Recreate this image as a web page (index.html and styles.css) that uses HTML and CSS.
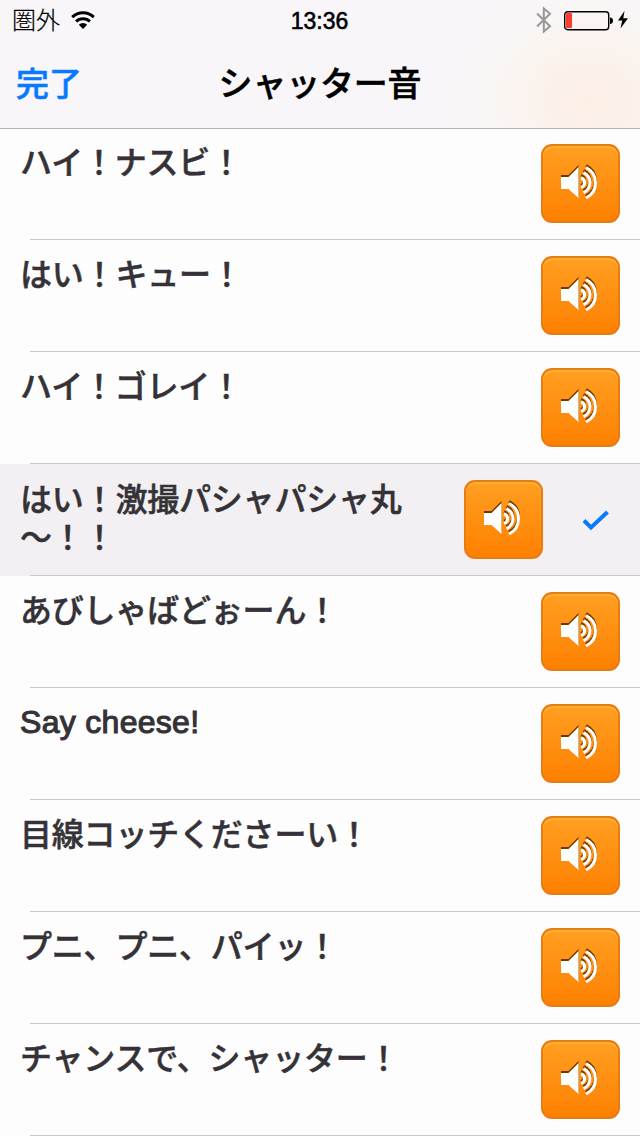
FILE: index.html
```html
<!DOCTYPE html>
<html lang="ja">
<head>
<meta charset="utf-8">
<title>シャッター音</title>
<link rel="stylesheet" href="styles.css">
</head>
<body>
<header class="header">
  <div class="status">
    <div class="status-left">
      <span class="carrier">圏外</span>
      <svg class="wifi" width="26" height="20" viewBox="0 0 26 20">
        <path d="M2.200 7.200a15.600 15.600 0 0 1 21.600 0M6.100 11.500a9.800 9.800 0 0 1 13.800 0" fill="none" stroke="#000" stroke-width="3"/>
        <path d="M13 19l-4.200-4.300a6 6 0 0 1 8.400 0z"/>
      </svg>
    </div>
    <span class="clock">13:36</span>
    <div class="status-right">
      <svg width="16" height="28" viewBox="0 0 16 28">
        <path d="M1 7.500l13 12.700-6.200 5.300V2.500L14 7.800 1 20.500" fill="none" stroke="#98989b" stroke-width="2"/>
      </svg>
      <svg class="battery" width="50" height="20" viewBox="0 0 50 20">
        <rect x=".7" y=".7" width="44" height="18" rx="3" fill="none" stroke="#000" stroke-width="1.400"/>
        <rect x="2" y="2" width="6" height="15" rx="1" fill="#ff3b30"/>
        <path d="M46 6.500q3 .2 3 3.200t-3 3.200z"/>
      </svg>
      <svg class="bolt" width="12" height="18" viewBox="0 0 12 18">
        <path d="M7.500 0L1 9.600h4.200L3.500 17.500 11 7.300H6.300z"/>
      </svg>
    </div>
  </div>
  <nav class="nav">
    <a class="done">完了</a>
    <h1 class="title">シャッター音</h1>
  </nav>
</header>
<svg width="0" height="0" class="defs">
  <symbol id="speaker" viewBox="0 0 40 36">
    <path d="M1 12h7.500L18.500 2v31L8.500 24H1z"/>
    <path d="M21 12.800a5 5 0 0 1 0 9.600M23.500 7.600a11 11 0 0 1 0 20M26 2.500a17 17 0 0 1 0 30.500" class="waves"/>
  </symbol>
</svg>
<ul class="list">
  <li class="row"><span class="label">ハイ！ナスビ！</span><button class="play"><svg class="icon"><use href="#speaker"/></svg></button></li>
  <li class="row"><span class="label">はい！キュー！</span><button class="play"><svg class="icon"><use href="#speaker"/></svg></button></li>
  <li class="row"><span class="label">ハイ！ゴレイ！</span><button class="play"><svg class="icon"><use href="#speaker"/></svg></button></li>
  <li class="row selected"><span class="label">はい！激撮パシャパシャ丸<br>〜！！</span><button class="play"><svg class="icon"><use href="#speaker"/></svg></button><svg class="check" width="28" height="22" viewBox="0 0 28 22"><path d="M2 10.500l7 7L25.500 2" fill="none" stroke="#087aff" stroke-width="4"/></svg></li>
  <li class="row"><span class="label">あびしゃばどぉーん！</span><button class="play"><svg class="icon"><use href="#speaker"/></svg></button></li>
  <li class="row"><span class="label latin">Say cheese!</span><button class="play"><svg class="icon"><use href="#speaker"/></svg></button></li>
  <li class="row"><span class="label">目線コッチくださーい！</span><button class="play"><svg class="icon"><use href="#speaker"/></svg></button></li>
  <li class="row"><span class="label">プニ、プニ、パイッ！</span><button class="play"><svg class="icon"><use href="#speaker"/></svg></button></li>
  <li class="row"><span class="label">チャンスで、シャッター！</span><button class="play"><svg class="icon"><use href="#speaker"/></svg></button></li>
</ul>
</body>
</html>
```
FILE: styles.css
```css
* { box-sizing: border-box; }
body {
  margin: 0;
  height: 1136px;
  overflow: hidden;
  background: #fefdfe;
  color: #343236;
  font-family: "Liberation Sans", "Noto Sans CJK JP", sans-serif;
}
.header {
  height: 129px;
  margin-bottom: -1px;
  border-bottom: 1px solid #b2b1b4;
  background: radial-gradient(ellipse 150px 130px at 590px 100px, #fcefe6 0%, #fbf2ec 35%, rgba(249, 246, 243, .6) 70%, rgba(248, 246, 249, 0) 100%), #f8f6f9;
  color: #000;
}
.status {
  display: grid;
  grid-template-columns: 1fr auto 1fr;
  align-items: center;
  height: 40px;
  padding: 0 11px 0 12px;
}
.status-left, .status-right { display: flex; align-items: center; }
.status-right { justify-content: flex-end; }
.carrier {
  margin-top: -2px;
  font: 300 24px/36px "Noto Sans CJK JP", sans-serif;
  -webkit-text-stroke: .2px #000;
}
.wifi { margin: -1px 0 0 10px; }
.clock {
  margin: 2px 2px 0 0;
  font-size: 23px;
  line-height: 38px;
  -webkit-text-stroke: .6px #000;
}
.battery { margin: 2px 0 0 12px; }
.bolt { margin: 0 0 0 3px; }
.nav {
  display: grid;
  grid-template-columns: 1fr auto 1fr;
  align-items: center;
  height: 88px;
  padding: 0 16px 4px;
}
.done {
  color: #087aff;
  font: 500 33px/48px "Noto Sans CJK JP", sans-serif;
  -webkit-text-stroke: .5px #087aff;
}
.title {
  margin: 0;
  font: 500 34px/48px "Noto Sans CJK JP", sans-serif;
  letter-spacing: -.2px;
  -webkit-text-stroke: .5px #000;
}
.defs { position: absolute; }
.list { margin: 0; padding: 0; list-style: none; }
.row {
  display: flex;
  align-items: flex-start;
  height: 112px;
  padding: 16px 20px 0 20px;
  background: linear-gradient(#c8c7cc, #c8c7cc) 30px 111px / 610px 1px no-repeat;
}
.selected {
  background-color: #f2f0f3;
  padding-right: 30px;
}
.label {
  flex: 1;
  margin-top: -3px;
  font: 500 32px/38px "Noto Sans CJK JP", sans-serif;
  letter-spacing: -.2px;
  white-space: nowrap;
  -webkit-text-stroke: .5px #343236;
}
.selected .label { margin-top: -2px; }
.latin {
  margin-top: -1px;
  font: 400 32px/38px "Liberation Sans", sans-serif;
  letter-spacing: .3px;
  -webkit-text-stroke: 1.1px #343236;
}
.play {
  display: flex;
  align-items: center;
  justify-content: center;
  width: 79px;
  height: 79px;
  padding: 0 1px 2px 0;
  border: 2px solid #e87b12;
  border-radius: 11px;
  background: linear-gradient(#ff9f22, #ff8000);
  box-shadow: inset 0 2px 1px #ffb335;
}
.icon {
  width: 40px;
  height: 36px;
  overflow: visible;
  fill: #fff;
  filter: drop-shadow(0 -1.5px 0 #6e3a00);
}
.waves { fill: none; stroke: #fff; stroke-width: 3; }
.check { margin: 30px 0 0 39px; }
```
